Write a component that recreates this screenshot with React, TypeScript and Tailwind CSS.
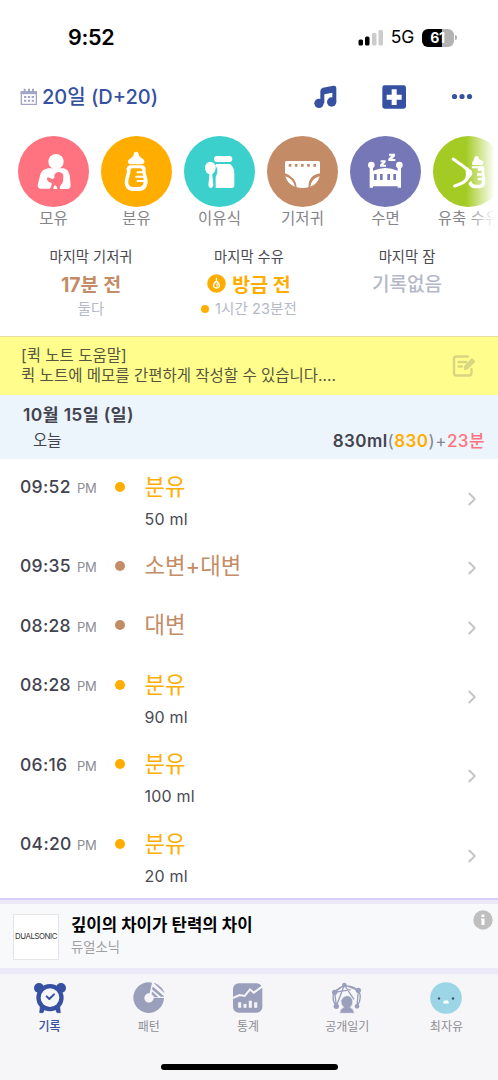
import type { ReactNode } from 'react';
import { ChevronRight } from 'lucide-react';

const BreastIcon = () => (
  <svg viewBox="55 30 213 213" className="w-full h-full" fill="#fff">
    <circle cx="169" cy="107" r="23" />
    <path d="M146 127H191Q206 129 210 148L213 178Q213 189 203 189H181Q179 182 184 176Q193 166 190 158Q194 147 186 141Q177 135 168 141Q162 147 164 155L158 160Q150 156 145 154Q139 158 144 164Q149 170 156 171Q157 178 151 188H122Q114 187 114 178L122 145Q127 130 146 127Z" />
    <path d="M161 189Q161 181 166 177Q173 181 173 189Z" />
  </svg>
);

const BottleIcon = () => (
  <svg viewBox="304.500 30 213 213" className="w-full h-full" fill="#fff">
    <path d="M403 84Q403 77 410 77Q417 77 417 84Q417 90 426 96Q436 102 435 109Q433 115 424 115H396Q385 114 385 107Q386 101 394 97Q403 91 403 84Z" />
    <path d="M391 118H429Q441 122 438 132Q437 138 441 149Q448 168 441 182Q434 195 418 195H402Q385 195 379 183Q373 172 378 154L382 140L381 128Q382 121 391 118Z" />
    <path d="M398 127H421Q430 128 428 137L431 152Q435 167 430 177Q426 183 417 183H401Q390 183 387 174Q385 165 390 151L393 137Q392 128 398 127Z" fill="#ffae00" />
    <path d="M414 139H435M410 152H437M414 165H437" stroke="#fff" strokeWidth="6" strokeLinecap="round" />
  </svg>
);

const FoodIcon = () => (
  <svg viewBox="42 30 213 213" className="w-full h-full" fill="#fff">
    <rect x="132" y="90" width="55" height="18" rx="9" />
    <path d="M139 114H180Q193 124 193 142V178Q193 186 185 186H137V153Q144 142 142 130Q140 122 135 118Z" />
    <ellipse cx="121" cy="126" rx="16" ry="19" />
    <path d="M119 140H126L130 177Q129 186 122 186Q115 185 115 177Z" />
  </svg>
);

const DiaperIcon = () => (
  <svg viewBox="291 30 213 213" className="w-full h-full" fill="#fff">
    <path d="M350 105H445Q450 105 450 110V142Q424 146 417 167Q415 176 416 184Q398 188 380 184Q380 171 371 159Q360 146 345 142V110Q345 105 350 105Z" />
    <path d="M346 151Q368 157 375 182Q354 176 346 151ZM449 151Q442 176 421 182Q425 157 449 151Z" />
    <path d="M356 118H438" stroke="#c48c66" strokeWidth="8" strokeDasharray="8 10.500" />
  </svg>
);

const CribIcon = () => (
  <svg viewBox="36 30 213 213" className="w-full h-full" fill="#fff">
    <circle cx="100" cy="117" r="10" />
    <circle cx="184" cy="117" r="10" />
    <path d="M95 120H105V134Q125 126 142 126Q161 126 179 134V120H189V185H179V181H105V185H95Z" />
    <path d="M108 144H116V162H108ZM126 144H134V162H126ZM148 144H156V162H148ZM166 144H174V162H166Z" fill="#7577b6" />
    <path d="M153 83H171V90L163 99H172V105H151V98L160 89H153ZM128 103H143V108L136 116H144V122H126V116L134 109H128Z" />
  </svg>
);

const PumpIcon = () => (
  <svg viewBox="284.500 30 213 213" className="w-full h-full" fill="#fff">
    <path d="M345 99L376 121Q388 134 397 137Q400 146 388 155Q380 172 349 180" fill="none" stroke="#fff" strokeWidth="9" strokeLinejoin="round" strokeLinecap="round" />
    <path d="M379 121Q388 122 397 132L403 143Q395 154 389 163L375 176Q389 147 379 121Z" />
    <path d="M404 107L408 99Q408 90 415 90Q422 90 422 98L434 106Q438 113 431 117H405Q398 113 404 107Z" />
    <path d="M401 121H436Q441 125 438 135L442 162Q444 185 426 187H409Q394 186 391 172L399 164Q402 176 413 176H426Q432 173 432 163H419V156H432V149H417V142H431V134H419V127H401Z" />
  </svg>
);

const actions = [
  { label: '모유', bg: 'bg-[#ff7380]', icon: <BreastIcon /> },
  { label: '분유', bg: 'bg-[#ffae00]', icon: <BottleIcon /> },
  { label: '이유식', bg: 'bg-[#3bd0cc]', icon: <FoodIcon /> },
  { label: '기저귀', bg: 'bg-[#c48c66]', icon: <DiaperIcon /> },
  { label: '수면', bg: 'bg-[#7577b6]', icon: <CribIcon /> },
  { label: '유축 수유', bg: 'bg-[#a4cb24]', icon: <PumpIcon /> },
];

const records = [
  { time: '09:52', title: '분유', detail: '50 ml', feed: true },
  { time: '09:35', title: '소변+대변', detail: '', feed: false },
  { time: '08:28', title: '대변', detail: '', feed: false },
  { time: '08:28', title: '분유', detail: '90 ml', feed: true },
  { time: '06:16', title: '분유', detail: '100 ml', feed: true },
  { time: '04:20', title: '분유', detail: '20 ml', feed: true },
];

const StatusBar = () => (
  <div className="h-[75px] flex items-center justify-between pl-[68px] pr-[41px] text-black shrink-0">
    <span className="text-[21.500px] font-semibold tracking-[-0.3px]">9:52</span>
    <div className="flex items-center">
      <svg width="26" height="17" viewBox="0 0 26 17" className="mr-[7px]">
        <rect x="0.500" y="10.500" width="4.500" height="6" rx="1.500" />
        <rect x="7" y="7.500" width="4.500" height="9" rx="1.500" />
        <rect x="14" y="4" width="4.500" height="12.500" rx="1.500" fill="#ccc" />
        <rect x="20.500" y="1" width="4.500" height="15.500" rx="1.500" fill="#ccc" />
      </svg>
      <span className="text-[17.500px] tracking-[-0.2px]">5G</span>
      <div className="ml-[8px] w-8 h-[18px] rounded-[6px] bg-[linear-gradient(90deg,#000_61%,#b3b3b3_61%)] text-white text-[14px] leading-none tracking-[-0.4px] font-bold flex items-center justify-center pr-px">61</div>
      <div className="ml-px w-[2px] h-[5px] rounded-r-full bg-[#b3b3b3]" />
    </div>
  </div>
);

const Header = () => (
  <div className="h-[43px] flex items-center pl-5 pr-[25px] text-[#3650a2] shrink-0">
    <svg width="18" height="18" viewBox="60 264 54 54" fill="none" stroke="#a3a5c6">
      <path d="M64 276H109V313H64Z" strokeWidth="4" />
      <path d="M62 278H111" strokeWidth="9" />
      <path d="M74 266V278M87 266V278M99 266V278" strokeWidth="6" />
      <path d="M72 291H102M72 302H102" strokeWidth="6" strokeDasharray="7 4.500" />
    </svg>
    <span className="ml-[4px] text-[20px] font-medium">20일 (D+20)</span>
    <svg width="24" height="24" viewBox="198 252 72 72" fill="currentColor" className="ml-auto">
      <path d="M217 270Q217 262 225 260L256 254Q265 253 265 261V303H253V275L229 280V307H217Z" />
      <circle cx="213" cy="307" r="14" />
      <circle cx="251" cy="303" r="14" />
    </svg>
    <svg width="24" height="24" viewBox="401 252 72 72" className="ml-[44px]">
      <rect x="402" y="253" width="71" height="70" rx="7" fill="currentColor" />
      <path d="M430 265H445V281H460V296H445V312H430V296H415V281H430Z" fill="#fff" />
    </svg>
    <svg width="22" height="8" viewBox="0 0 22 8" fill="currentColor" className="ml-[45px]">
      <circle cx="3.500" cy="3.500" r="2.600" />
      <circle cx="11" cy="3.500" r="2.600" />
      <circle cx="18.500" cy="3.500" r="2.600" />
    </svg>
  </div>
);

const QuickActions = () => (
  <div className="relative pt-[17.500px] h-[113px] overflow-hidden shrink-0">
    <div className="flex pl-[12px]">
      {actions.map((action) => (
        <div key={action.label} className="w-[83px] shrink-0 flex flex-col items-center">
          <div className={`size-[71px] rounded-full overflow-hidden ${action.bg}`}>{action.icon}</div>
          <span className="mt-[2.500px] text-[15.500px] leading-[20px] text-[#85858a] whitespace-nowrap">{action.label}</span>
        </div>
      ))}
    </div>
    <div className="absolute inset-y-0 right-0 w-[32px] bg-linear-to-r from-white/0 to-white to-90%" />
  </div>
);

const Summary = () => (
  <div className="h-[105px] flex shrink-0 pt-[15.500px] pl-[12px] text-center">
    <div className="w-[158px]">
      <div className="text-[14.300px] leading-[20px] text-[#4a4a52]">마지막 기저귀</div>
      <div className="mt-[4px] text-[19.500px] leading-[28px] font-bold text-[#c48c66]">17분 전</div>
      <div className="-mt-[2px] text-[14.300px] leading-[24px] text-[#b4b8c8]">둘다</div>
    </div>
    <div className="w-[158px]">
      <div className="text-[14.300px] leading-[20px] text-[#4a4a52]">마지막 수유</div>
      <div className="mt-[4px] flex items-center justify-center gap-[6px] text-[19.500px] leading-[28px] font-bold text-[#ffae00]">
        <svg width="19" height="19" viewBox="0 0 19 19" className="-mt-[2px]">
          <circle cx="9.500" cy="9.500" r="9.300" fill="currentColor" />
          <path d="M9.500 4.500V6.500M8 8.500Q5.500 12 7.500 13.500Q9.500 14.500 11.500 13.500Q13.500 12 11 8.500Q9.500 6.500 8 8.500ZM10 10V12" fill="none" stroke="#fff" strokeWidth="1.300" strokeLinecap="round" />
        </svg>
        방금 전
      </div>
      <div className="-mt-[2px] flex items-center justify-center gap-[6px] text-[14.500px] leading-[24px] tracking-[0.1px] text-[#b4b8c8]">
        <span className="size-2 rounded-full bg-[#ffae00]" />
        1시간 23분전
      </div>
    </div>
    <div className="w-[158px]">
      <div className="text-[14.300px] leading-[20px] text-[#4a4a52]">마지막 잠</div>
      <div className="mt-[4px] text-[19px] leading-[28px] font-medium text-[#b4b8c8]">기록없음</div>
    </div>
  </div>
);

const QuickNote = () => (
  <div className="h-[59px] flex items-center justify-between pl-[21px] pr-[22px] bg-[#fffe8c] border-t border-[#e2e09a] text-[#56563f] shrink-0">
    <div className="text-[15.500px] leading-[20px]">
      <div>[퀵 노트 도움말]</div>
      <div>퀵 노트에 메모를 간편하게 작성할 수 있습니다....</div>
    </div>
    <svg width="24" height="24" viewBox="0 0 24 24" fill="none" stroke="#d9d681" strokeWidth="2.400" strokeLinecap="round" strokeLinejoin="round">
      <path d="M16 2.500H4.500Q2 2.500 2 5V19Q2 21.500 4.500 21.500H17Q19.500 21.500 19.500 19V15M6.500 8H14M6.500 12.500H10" />
      <path d="M13 15L13.500 12L20 5.500L22 7.500L15.500 14Z" fill="#d9d681" />
    </svg>
  </div>
);

const DayHeader = () => (
  <div className="h-[64px] flex items-end justify-between pl-[23px] pr-[13px] bg-[#ecf5fc] text-[#43434f] shrink-0">
    <div>
      <div className="text-[17.500px] leading-[24px] font-semibold tracking-[0.3px]">10월 15일 (일)</div>
      <div className="pl-[10px] pb-[6px] mt-[2px] text-[15.500px] leading-[24px]">오늘</div>
    </div>
    <div className="pb-[6px] text-[17px] leading-[24px] font-semibold tracking-[0.45px]">
      830ml<span className="font-normal text-[#85858f]">(</span><span className="text-[#ffae00]">830</span><span className="font-normal text-[#85858f]">)+</span><span className="text-[#ff7380] font-medium">23분</span>
    </div>
  </div>
);

const RecordList = () => (
  <div className="h-[439px] shrink-0">
    {records.map((record, idx) => (
      <div key={idx} className={`flex pl-5 pr-[16px] ${record.detail ? 'h-[79.400px]' : 'h-[59.500px]'}`}>
        <div className="w-[95px] pt-[16px] flex items-baseline leading-[24px]">
          <span className="w-[57px] text-[17.500px] font-medium tracking-[0.3px] text-[#43434f]">{record.time}</span>
          <span className="text-[13px] tracking-[-0.3px] text-[#8c8c92]">PM</span>
        </div>
        <div className={`mt-[22.500px] size-[10px] rounded-full ${record.feed ? 'bg-[#ffae00]' : 'bg-[#c48c66]'}`} />
        <div className="ml-[19.500px] pt-[12.500px]">
          <div className={`text-[22.300px] leading-[30px] ${record.feed ? 'text-[#ffae00]' : 'text-[#c48c66]'}`}>{record.title}</div>
          {record.detail && <div className="mt-[5px] text-[16px] leading-[24px] tracking-[0.2px] text-[#4a4a55]">{record.detail}</div>}
        </div>
        <ChevronRight className="ml-auto self-center -mr-[1px] size-[22px] text-[#c4c4c8]" strokeWidth={2} />
      </div>
    ))}
  </div>
);

const AdBanner = () => (
  <div className="shrink-0 border-t-2 border-[#d9cff8]">
    <div className="h-[74px] flex bg-[#f8f9fb] border-t-[4px] border-b-[6px] border-[#ebe9fa] px-[13px]">
      <div className="mt-[10px] size-[46px] bg-white border border-[#e5e5e5] flex items-center justify-center text-[7.800px] tracking-[-0.4px] text-[#333]">DUALSONIC</div>
      <div className="ml-3 pt-[9px]">
        <div className="text-[16.700px] leading-[24px] font-semibold text-black">깊이의 차이가 탄력의 차이</div>
        <div className="text-[13.300px] leading-[20px] text-[#a0a0a3]">듀얼소닉</div>
      </div>
      <svg width="20" height="20" viewBox="0 0 20 20" className="ml-auto mt-[6px] -mr-[8px]">
        <circle cx="10" cy="10" r="9.700" fill="#bfbfbf" />
        <path d="M8.500 4.500H11.500V7H8.500ZM8 8.500H11.500V15H8.500V10H8Z" fill="#fff" />
      </svg>
    </div>
  </div>
);

const AlarmIcon = () => (
  <svg width="32" height="32" viewBox="102 276 96 96" fill="#3650a2">
    <circle cx="117" cy="294" r="15" />
    <circle cx="183" cy="294" r="15" />
    <circle cx="150" cy="323" r="41" />
    <path d="M121 348L119 368H129L134 356ZM179 348L181 368H171L166 356Z" stroke="#3650a2" strokeWidth="2" strokeLinejoin="round" />
    <circle cx="150" cy="323" r="28" fill="#f6f6f8" />
    <path d="M140 319L148 327L162 313" fill="none" stroke="#3650a2" strokeWidth="6" strokeLinecap="round" strokeLinejoin="round" />
  </svg>
);

const PatternIcon = () => (
  <svg width="32" height="32" viewBox="399 277 96 96" fill="#9a9fbc">
    <path d="M456 279A46 46 0 1 0 492 325H461A14 14 0 1 1 449 311Z" />
    <path d="M463 281Q484 289 492 308ZM459 292L491 320H482L457 299ZM457 307L473 322H464L456 314Z" stroke="#9a9fbc" strokeWidth="2" />
  </svg>
);

const StatsIcon = () => (
  <svg width="32" height="32" viewBox="-21 280 96 96">
    <rect x="-18" y="284" width="88" height="88" rx="17" fill="#9a9fbc" />
    <path d="M-18 328L2 319L17 322L33 302L44 312L70 293" fill="none" stroke="#f6f6f8" strokeWidth="6" />
    <path d="M2 341V357M18 346V357M34 336V357M50 341V357" stroke="#f6f6f8" strokeWidth="9" />
  </svg>
);

const DiaryIcon = () => (
  <svg width="32" height="32" viewBox="276 278 96 96" fill="#9a9fbc">
    <path d="M287 309L316 287L358 303L354 350M316 287L292 350L287 309L335 301M316 287L345 330M292 350Q278 334 284 311Q300 292 320 289Q350 291 361 309Q369 330 354 350" fill="none" stroke="#9a9fbc" strokeWidth="4" />
    <circle cx="316" cy="287" r="7" />
    <circle cx="287" cy="309" r="8" />
    <circle cx="358" cy="303" r="8" />
    <circle cx="292" cy="351" r="8" />
    <circle cx="354" cy="351" r="7" />
    <path d="M302 372Q302 359 314 354Q304 346 306 333Q312 319 324 319Q336 319 341 332Q344 346 334 354Q345 359 346 372Z" stroke="#f6f6f8" strokeWidth="2" />
  </svg>
);

const FaceIcon = () => (
  <svg width="32" height="32" viewBox="0 0 32 32">
    <circle cx="16" cy="16" r="15.800" fill="#9bd5e6" />
    <circle cx="9" cy="16.500" r="1.200" fill="#37556e" />
    <circle cx="23" cy="16.500" r="1.200" fill="#37556e" />
    <path d="M14 18.500H18L19 21.500H13Z" fill="#fff" />
  </svg>
);

const TabItem = ({ label, active, children }: { label: string; active?: boolean; children: ReactNode }) => (
  <div className="flex-1 flex flex-col items-center">
    {children}
    <span className={`mt-[4px] text-[12px] leading-[18px] ${active ? 'text-[#3650a2] font-medium' : 'text-[#8e8e93]'}`}>{label}</span>
  </div>
);

const TabBar = () => (
  <div className="h-[107px] bg-[#f6f6f8] flex flex-col items-center shrink-0">
    <div className="w-[496px] self-start flex pt-[8px]">
      <TabItem label="기록" active><AlarmIcon /></TabItem>
      <TabItem label="패턴"><PatternIcon /></TabItem>
      <TabItem label="통계"><StatsIcon /></TabItem>
      <TabItem label="공개일기"><DiaryIcon /></TabItem>
      <TabItem label="최자유"><FaceIcon /></TabItem>
    </div>
    <div className="mt-auto mb-[11px] w-[177px] h-[6px] rounded-full bg-black" />
  </div>
);

export default function App() {
  return (
    <div className="w-[498px] h-[1080px] overflow-hidden bg-white flex flex-col font-[Inter,'Noto_Sans_CJK_KR',sans-serif]">
      <StatusBar />
      <Header />
      <QuickActions />
      <Summary />
      <QuickNote />
      <DayHeader />
      <RecordList />
      <AdBanner />
      <TabBar />
    </div>
  );
}
